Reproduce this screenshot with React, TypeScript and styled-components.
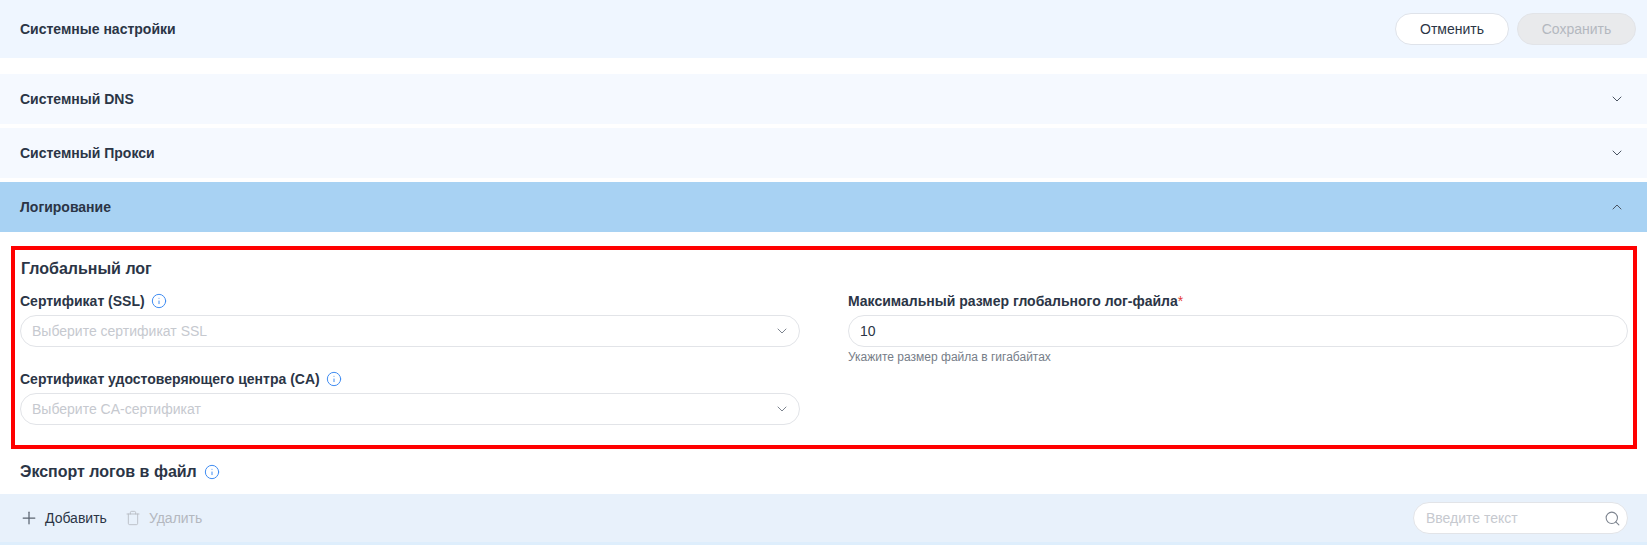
import React from "react";
import styled, { createGlobalStyle } from "styled-components";
import { ChevronDown, ChevronUp, Info, Plus, Search, Trash } from "lucide-react";

const GlobalStyle = createGlobalStyle`
	html, body {
		margin: 0;
		padding: 0;
		background: #fff;
		font-family: "Liberation Sans", Arial, sans-serif;
		color: #1f2937;
	}
`;

const Page = styled.div`
	width: 1647px;
	height: 545px;
	overflow: hidden;
`;

const Header = styled.header`
	height: 58px;
	background: #eff6ff;
	display: flex;
	align-items: center;
	justify-content: space-between;
	padding: 0 11px 0 20px;
	margin-bottom: 16px;
`;

const Title = styled.div`
	font-size: 14px;
	font-weight: 700;
	color: #2b3546;
`;

const Actions = styled.div`
	display: flex;
	gap: 8px;
`;

const Button = styled.button<{ $disabled?: boolean; $width: number }>`
	width: ${(p) => p.$width}px;
	height: 32px;
	border-radius: 16px;
	font: 14px "Liberation Sans", Arial, sans-serif;
	border: 1px solid ${(p) => (p.$disabled ? "#e2e4e8" : "#dfe3ea")};
	background: ${(p) => (p.$disabled ? "#e9eaec" : "#fff")};
	color: ${(p) => (p.$disabled ? "#b4b8bf" : "#2b3546")};
	padding: 0;
`;

const Row = styled.div<{ $active?: boolean }>`
	height: 50px;
	margin-bottom: 4px;
	padding: 0 22px 0 20px;
	display: flex;
	align-items: center;
	justify-content: space-between;
	background: ${(p) => (p.$active ? "#a8d2f3" : "#f5f9ff")};
`;

const Outlined = styled.section`
	margin: 14px 10px 0 11px;
	height: 203px;
	box-sizing: border-box;
	border: 4px solid #ff0000;
	padding: 9px 5px 0 5px;
`;

const SectionTitle = styled.h3`
	margin: 0;
	font-size: 16px;
	line-height: 20px;
	font-weight: 700;
	color: #2b3546;
	display: flex;
	align-items: center;
	gap: 7px;
`;

const LogTitle = styled(SectionTitle)`
	padding-left: 1px;
`;

const ExportTitle = styled(SectionTitle)`
	margin: 13px 0 12px 20px;
`;

const Columns = styled.div`
	display: grid;
	grid-template-columns: 780px 780px;
	column-gap: 48px;
	margin-top: 13px;
`;

const Column = styled.div`
	display: flex;
	flex-direction: column;
`;

const Field = styled.div`
	height: 78px;
`;

const Label = styled.label`
	font-size: 14px;
	line-height: 18px;
	font-weight: 700;
	color: #2b3546;
	display: flex;
	align-items: center;
	gap: 6px;
	margin-bottom: 5px;
`;

const Required = styled.span`
	color: #e53935;
	font-weight: 400;
	margin-left: -6px;
`;

const Control = styled.div<{ $value?: boolean }>`
	height: 32px;
	box-sizing: border-box;
	border: 1px solid #e2e4e8;
	border-radius: 16px;
	padding: 0 9px 0 11px;
	display: flex;
	align-items: center;
	justify-content: space-between;
	font-size: 14px;
	background: #fff;
	color: ${(p) => (p.$value ? "#2b3546" : "#c6c9cf")};
`;

const Hint = styled.div`
	font-size: 12px;
	line-height: 16px;
	margin-top: 2px;
	color: #767d88;
`;

const Toolbar = styled.div`
	height: 48px;
	background: #e8f1fb;
	border-bottom: 3px solid #deeefc;
	display: flex;
	align-items: center;
	justify-content: space-between;
	padding: 0 19px;
`;

const ToolGroup = styled.div`
	display: flex;
	align-items: center;
	gap: 18px;
`;

const ToolButton = styled.span<{ $disabled?: boolean }>`
	display: flex;
	align-items: center;
	gap: 8px;
	font-size: 14px;
	color: ${(p) => (p.$disabled ? "#b4b8bf" : "#2b3546")};
`;

const PlusIcon = styled(Plus)`
	color: #5b6470;
	margin-right: -2px;
`;

const SearchBox = styled(Control)`
	width: 215px;
	font-size: 14px;
	color: #c6c9cf;
	padding: 0 6px 0 12px;
`;

const Chevron = styled(ChevronDown)`
	color: #4b5563;
`;

const SelectChevron = styled(ChevronDown)`
	color: #7d848f;
`;

const ChevronOpen = styled(ChevronUp)`
	color: #4b5563;
`;

const InfoIcon = styled(Info)`
	color: #3f8cf2;
`;

const App = () => {
	return (
		<Page>
			<GlobalStyle />
			<Header>
				<Title>Системные настройки</Title>
				<Actions>
					<Button $width={114}>Отменить</Button>
					<Button $width={119} $disabled>
						Сохранить
					</Button>
				</Actions>
			</Header>
			<Row>
				<Title>Системный DNS</Title>
				<Chevron size={16} strokeWidth={1.5} />
			</Row>
			<Row>
				<Title>Системный Прокси</Title>
				<Chevron size={16} strokeWidth={1.5} />
			</Row>
			<Row $active>
				<Title>Логирование</Title>
				<ChevronOpen size={16} strokeWidth={1.5} />
			</Row>
			<Outlined>
				<LogTitle>Глобальный лог</LogTitle>
				<Columns>
					<Column>
						<Field>
							<Label>
								Сертификат (SSL) <InfoIcon size={16} strokeWidth={1.5} />
							</Label>
							<Control>
								Выберите сертификат SSL
								<SelectChevron size={16} strokeWidth={1.5} />
							</Control>
						</Field>
						<Field>
							<Label>
								Сертификат удостоверяющего центра (CA) <InfoIcon size={16} strokeWidth={1.5} />
							</Label>
							<Control>
								Выберите CA-сертификат
								<SelectChevron size={16} strokeWidth={1.5} />
							</Control>
						</Field>
					</Column>
					<Column>
						<Label>
							Максимальный размер глобального лог-файла<Required>*</Required>
						</Label>
						<Control $value>10</Control>
						<Hint>Укажите размер файла в гигабайтах</Hint>
					</Column>
				</Columns>
			</Outlined>
			<ExportTitle>
				Экспорт логов в файл <InfoIcon size={16} strokeWidth={1.5} />
			</ExportTitle>
			<Toolbar>
				<ToolGroup>
					<ToolButton>
						<PlusIcon size={20} strokeWidth={1.5} />
						Добавить
					</ToolButton>
					<ToolButton $disabled>
						<Trash size={16} strokeWidth={1.25} />
						Удалить
					</ToolButton>
				</ToolGroup>
				<SearchBox>
					Введите текст
					<Search size={17} strokeWidth={1.5} color="#7d848f" />
				</SearchBox>
			</Toolbar>
		</Page>
	);
};

export default App;
